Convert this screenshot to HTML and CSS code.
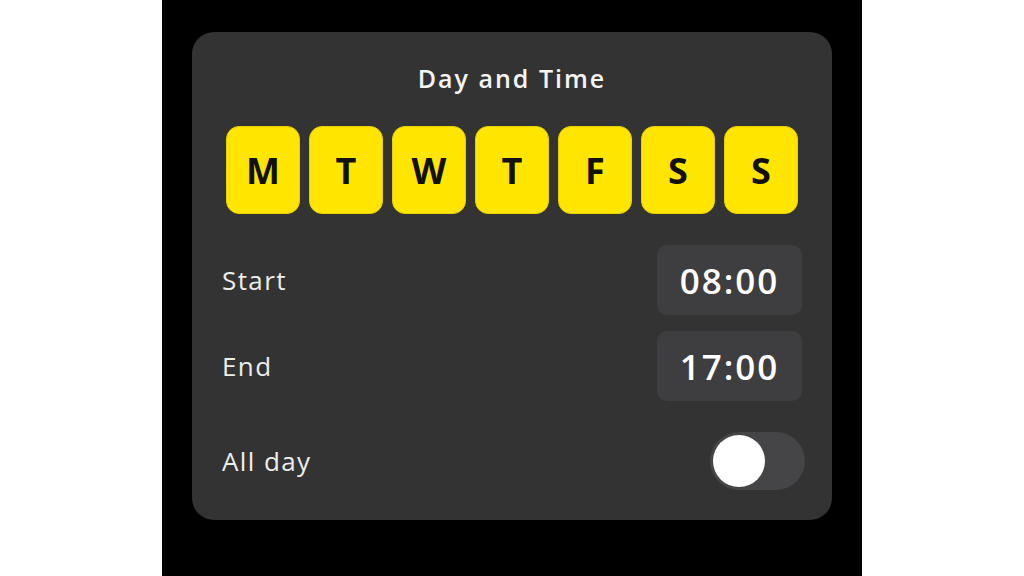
FILE: index.html
```html
<!DOCTYPE html>
<html lang="en">
<head>
    <meta charset="UTF-8">
    <title>Day and Time</title>
    <link rel="stylesheet" href="styles.css">
</head>
<body>
    <div class="screen">
        <div class="card">
            <h2 class="title">Day and Time</h2>
            <div class="days">
                <button class="day">M</button>
                <button class="day">T</button>
                <button class="day">W</button>
                <button class="day">T</button>
                <button class="day">F</button>
                <button class="day">S</button>
                <button class="day">S</button>
            </div>
            <div class="row row-start">
                <span class="label">Start</span>
                <span class="time">08:00</span>
            </div>
            <div class="row row-end">
                <span class="label">End</span>
                <span class="time">17:00</span>
            </div>
            <div class="row row-allday">
                <span class="label">All day</span>
                <span class="toggle"><span class="knob"></span></span>
            </div>
        </div>
    </div>
</body>
</html>
```

FILE: styles.css
```css
body {
    margin: 0;
    background: #ffffff;
    font-family: "Open Sans", Arial, sans-serif;
}
.screen {
    width: 700px;
    height: 576px;
    margin: 0 auto;
    background: #000000;
    padding: 32px 30px 0;
    box-sizing: border-box;
}
.card {
    background: #333333;
    border-radius: 22px;
    padding: 31px 30px 30px;
}
.title {
    margin: 0;
    font-size: 25px;
    line-height: 30px;
    font-weight: 600;
    color: #f4f4f4;
    text-align: center;
    letter-spacing: 2px;
}
.days {
    display: flex;
    justify-content: center;
    gap: 9px;
    margin-top: 33px;
}
.day {
    width: 74px;
    height: 88px;
    border: 1px solid #e8cf00;
    border-radius: 13px;
    background: #ffe500;
    color: #111111;
    font-family: "Open Sans", Arial, sans-serif;
    font-size: 36px;
    font-weight: 700;
    padding: 0;
}
.row {
    display: flex;
    align-items: center;
    justify-content: space-between;
}
.row-start {
    margin-top: 31px;
}
.row-end {
    margin-top: 16px;
}
.row-allday {
    margin-top: 31px;
}
.label {
    font-size: 26px;
    color: #ededed;
    letter-spacing: 1.4px;
}
.time {
    width: 145px;
    height: 70px;
    border-radius: 10px;
    background: #3e3e40;
    color: #ffffff;
    font-size: 35px;
    font-weight: 600;
    display: flex;
    align-items: center;
    justify-content: center;
    letter-spacing: 2px;
}
.toggle {
    width: 95px;
    height: 58px;
    border-radius: 29px;
    background: #454547;
    padding: 3px;
    box-sizing: border-box;
    margin-right: -3px;
    display: flex;
    align-items: center;
}
.knob {
    width: 52px;
    height: 52px;
    border-radius: 50%;
    background: #ffffff;
}
```
